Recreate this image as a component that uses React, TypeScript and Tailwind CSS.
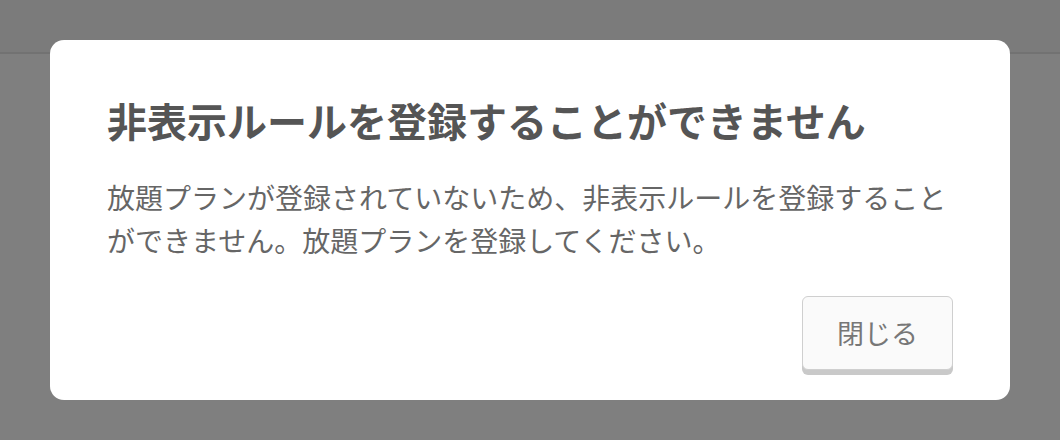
export default function App() {
  return (
    <div
      className="relative h-[440px] w-full overflow-hidden bg-[#7f7f7f]"
      style={{ fontFamily: '"Noto Sans CJK JP", "Noto Sans", sans-serif' }}
    >
      <div className="h-[54px] border-b-2 border-[#727272] bg-[#7b7b7b]" />

      <div className="absolute inset-0 flex items-center justify-center">
        <div className="flex h-[360px] w-[960px] flex-col rounded-[14px] bg-white px-[57px] pt-[56px] pb-[30px]">
          <h2 className="text-[40px] font-bold leading-[48px] text-[#555555]">
            非表示ルールを登録することができません
          </h2>
          <p className="mt-[32px] text-[28px] leading-[43px] text-[#666666]">
            放題プランが登録されていないため、非表示ルールを登録することができません。放題プランを登録してください。
          </p>
          <div className="mt-auto flex justify-end">
            <button className="h-[74px] w-[151px] rounded-[6px] border border-[#cfcfcf] bg-[#fafafa] text-[27px] text-[#777777] shadow-[0_5px_0_#c9c9c9]">
              閉じる
            </button>
          </div>
        </div>
      </div>
    </div>
  );
}
